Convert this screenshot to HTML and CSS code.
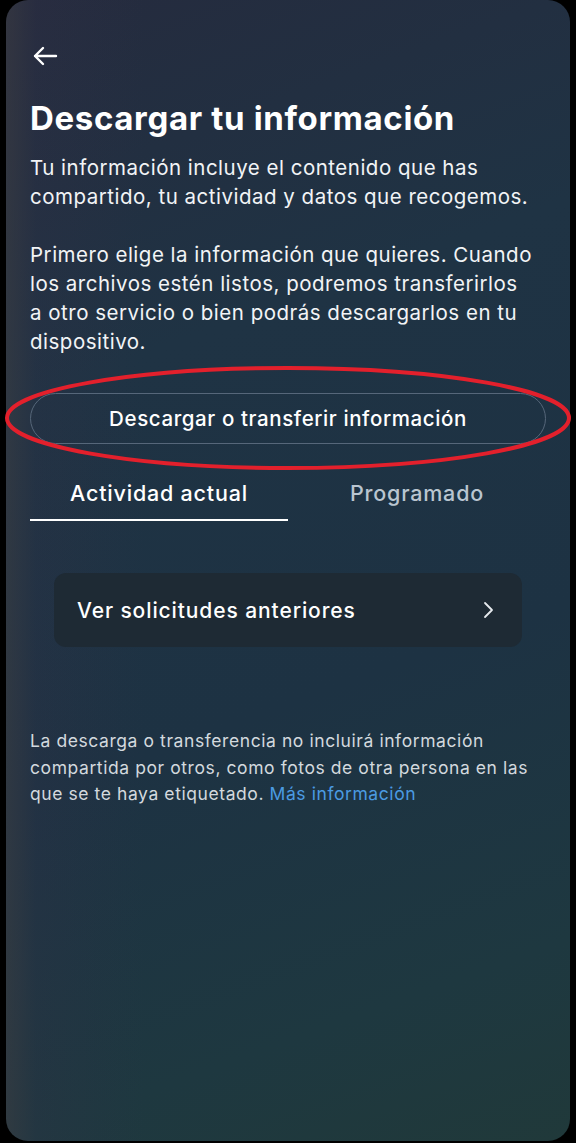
FILE: index.html
```html
<!DOCTYPE html>
<html lang="es">
<head>
<meta charset="utf-8">
<title>Descargar tu información</title>
<link rel="stylesheet" href="styles.css">
</head>
<body>
<div class="screen">
  <div class="panel">
    <div class="topbar">
      <svg class="back" width="26" height="20" viewBox="0 0 26 20" aria-hidden="true">
        <path d="M24 10H3M11 2L3 10L11 18" fill="none" stroke="#ffffff" stroke-width="2.4" stroke-linecap="round" stroke-linejoin="round"/>
      </svg>
    </div>
    <h1 class="title">Descargar tu información</h1>
    <p class="lead">Tu información incluye el contenido que has compartido, tu actividad y datos que recogemos.</p>
    <p class="lead">Primero elige la información que quieres. Cuando los archivos estén listos, podremos transferirlos a otro servicio o bien podrás descargarlos en tu dispositivo.</p>
    <div class="btn-wrap">
      <button class="outline-btn">Descargar o transferir información</button>
      <svg class="mark" viewBox="0 0 570 106" preserveAspectRatio="none" aria-hidden="true">
        <ellipse cx="285" cy="53" rx="281" ry="50" fill="none" stroke="#e3202c" stroke-width="4"/>
      </svg>
    </div>
    <div class="tabs">
      <div class="tab active">Actividad actual</div>
      <div class="tab">Programado</div>
    </div>
    <div class="card">
      <span>Ver solicitudes anteriores</span>
      <svg width="12" height="18" viewBox="0 0 12 18" aria-hidden="true">
        <path d="M3 2L10 9L3 16" fill="none" stroke="#e6eaee" stroke-width="1.8" stroke-linecap="round" stroke-linejoin="round"/>
      </svg>
    </div>
    <p class="note">La descarga o transferencia no incluirá información compartida por otros, como fotos de otra persona en las que se te haya etiquetado. <a class="link" href="#">Más información</a></p>
  </div>
</div>
</body>
</html>
```
FILE: styles.css
```css
html, body {
  margin: 0;
  padding: 0;
  background: #000;
}
body {
  width: 576px;
  height: 1143px;
  overflow: hidden;
  font-family: "Inter", "Roboto", "Liberation Sans", sans-serif;
  color: #fff;
}
.screen {
  padding: 0 6px 2px 6px;
  height: 1143px;
  box-sizing: border-box;
}
.panel {
  height: 100%;
  border-radius: 22px;
  box-sizing: border-box;
  padding: 0 24px;
  background:
    linear-gradient(90deg, rgba(60,60,66,0.6) 0px, rgba(50,48,70,0.25) 30px, rgba(0,0,0,0) 140px),
    linear-gradient(160deg, #252b3e 0%, #1f3344 30%, #1d3243 60%, #1e3840 85%, #20393a 100%);
  display: flex;
  flex-direction: column;
}
.topbar {
  height: 40px;
  padding-top: 46px;
  display: flex;
  align-items: flex-start;
}
.back {
  margin-left: 2px;
}
.title {
  margin: 12px 0 0 0;
  font-size: 33px;
  line-height: 40px;
  font-weight: 700;
  letter-spacing: 0.65px;
}
.lead {
  margin: 15px 12px 29px 0;
  font-size: 20.5px;
  line-height: 29px;
  font-weight: 400;
  letter-spacing: 0.5px;
  color: #f2f4f6;
}
.lead + .lead {
  margin-top: 0;
}
.btn-wrap {
  position: relative;
  margin-top: 8px;
}
.outline-btn {
  display: block;
  width: 100%;
  height: 51px;
  border: 1px solid #56677a;
  border-radius: 26px;
  background: transparent;
  color: #fff;
  font-family: inherit;
  font-size: 20.5px;
  font-weight: 500;
  letter-spacing: 0.6px;
}
.mark {
  position: absolute;
  left: -27px;
  top: -28px;
  width: 570px;
  height: 106px;
  pointer-events: none;
}
.tabs {
  display: flex;
  margin-top: 23px;
}
.tab {
  flex: 1;
  text-align: center;
  font-size: 21.5px;
  font-weight: 500;
  letter-spacing: 0.8px;
  height: 54px;
  line-height: 52px;
  color: #b9c5d0;
  box-sizing: border-box;
  border-bottom: 2px solid transparent;
}
.tab.active {
  color: #fff;
  border-bottom-color: #fff;
}
.card {
  margin: 52px 24px 0 24px;
  height: 74px;
  border-radius: 12px;
  background: #1e2a34;
  display: flex;
  align-items: center;
  justify-content: space-between;
  padding: 0 28px 0 23px;
  font-size: 21px;
  font-weight: 500;
  letter-spacing: 0.9px;
}
.note {
  margin: 81px 0 0 0;
  font-size: 17.5px;
  line-height: 26.5px;
  letter-spacing: 0.58px;
  color: #d3d9de;
}
.link {
  color: #4b9be2;
  text-decoration: none;
}
```
